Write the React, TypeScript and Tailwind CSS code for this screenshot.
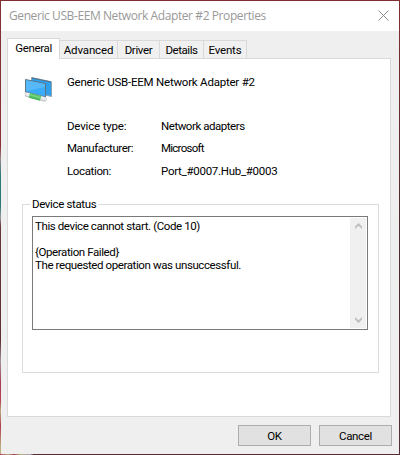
import { ReactNode } from "react";

type Tab = {
  label: string;
  className: string;
};

type Detail = {
  label: string;
  value: string;
  labelClass: string;
  valueClass: string;
};

const tabs: Tab[] = [
  { label: "Advanced", className: "w-[58px] tracking-[-0.15px]" },
  { label: "Driver", className: "w-[42px] tracking-[-0.35px]" },
  { label: "Details", className: "w-[44px] tracking-[-0.43px]" },
  { label: "Events", className: "w-[43px] tracking-[-0.2px]" },
];

const details: Detail[] = [
  {
    label: "Device type:",
    value: "Network adapters",
    labelClass: "tracking-[-0.18px]",
    valueClass: "tracking-[-0.46px]",
  },
  {
    label: "Manufacturer:",
    value: "Microsoft",
    labelClass: "tracking-[-0.45px]",
    valueClass: "tracking-[-0.75px]",
  },
  {
    label: "Location:",
    value: "Port_#0007.Hub_#0003",
    labelClass: "mt-px tracking-[-0.36px]",
    valueClass: "mt-px tracking-[-0.28px]",
  },
];

function AdapterIcon() {
  return (
    <svg width="32" height="32" viewBox="0 0 32 32" className="block">
      <path d="M9.5 5.5 29.5 9.8v14.7L9.5 20z" fill="#2f9fec" stroke="#8fa3ae" />
      <path d="m10 6 19 4" stroke="#4d7086" />
      <path d="M3.5 7.5 23.5 11.6v13.4L3.5 20z" fill="#3aabf7" stroke="#5f7482" />
      <path d="M4 8.2 23 12.1v3L4 19z" fill="#57b9fa" />
      <path d="m5 22.7 17.5 4.6" stroke="#bfc4c6" strokeWidth="4.5" strokeLinecap="round" />
      <path d="m5 22.2 17.5 4.6" stroke="#eceded" strokeWidth="3" strokeLinecap="round" />
      <path d="m7.5 23.4 11 2.9" stroke="#4ab85b" strokeWidth="5" />
      <path d="m7.7 22.8 11 2.9" stroke="#6fd47e" strokeWidth="2" />
    </svg>
  );
}

function Chevron({ down }: { down?: boolean }) {
  return (
    <svg width="7" height="6" viewBox="0 0 7 6" className={down ? "rotate-180" : ""}>
      <path d="M0 3.5 3.5 0 7 3.5V6L3.5 2.7 0 6z" fill="#bfbfbf" />
    </svg>
  );
}

function Button({ children }: { children: ReactNode }) {
  return (
    <button className="h-[21px] w-[73px] border border-[#adadad] bg-[#e1e1e1] text-center leading-[20px]">
      {children}
    </button>
  );
}

export default function App() {
  return (
    <div className="flex h-[455px] w-[400px] flex-col overflow-hidden bg-[#efefef] font-['Roboto','Liberation_Sans',sans-serif] text-[11.5px] leading-[13px] tracking-[-0.35px] whitespace-nowrap text-black">
      <div className="h-px shrink-0 bg-[#812d32]" />
      <div className="flex min-h-0 flex-1">
        <div className="w-px shrink-0 bg-[linear-gradient(to_bottom,#843035_0px,#8c3335_145px,#98868c_158px,#2a7a78_175px,#2c7976_205px,#9a9a9e_217px,#663638_225px,#5e3034_340px,#a2949c_360px,#a83c50_382px,#b64455_400px,#b9ad7b_410px,#b23c54_425px,#b9ad7b_445px)]" />
        <div className="flex min-w-0 flex-1 flex-col">
          <header className="flex h-[30px] shrink-0 items-center justify-between bg-white pr-[10px] pl-2">
            <h1 className="font-['Open_Sans','Noto_Sans',sans-serif] text-xs leading-[30px] tracking-[-0.41px] text-[#999]">
              Generic USB-EEM Network Adapter #2 Properties
            </h1>
            <svg width="11" height="11" viewBox="0 0 11 11" className="mb-[2px]">
              <path d="m.5.5 10 10m0-10-10 10" stroke="#8b8b8b" />
            </svg>
          </header>

          <main className="px-[6px] pt-[7px]">
            <nav className="flex h-[20px] items-end">
              <div className="z-10 -mb-px h-[21px] w-[53px] border border-b-0 border-[#d9d9d9] bg-white pt-[3px] text-center">
                General
              </div>
              {tabs.map((tab) => (
                <div
                  key={tab.label}
                  className={`h-[18px] border-t border-r border-[#d9d9d9] bg-[#f0f0f0] pt-[3px] text-center ${tab.className}`}
                >
                  {tab.label}
                </div>
              ))}
            </nav>

            <section className="h-[359px] w-[384px] border border-[#d9d9d9] bg-white pt-[13px] pl-[14px]">
              <div className="flex gap-[13px]">
                <AdapterIcon />
                <p className="pt-[4px] tracking-[-0.22px]">Generic USB-EEM Network Adapter #2</p>
              </div>

              <dl className="mt-[16px] ml-[45px] flex flex-col gap-[9px]">
                {details.map((item) => (
                  <div key={item.label} className="flex">
                    <dt className={`w-[94px] ${item.labelClass}`}>{item.label}</dt>
                    <dd className={item.valueClass}>{item.value}</dd>
                  </div>
                ))}
              </dl>

              <div className="mt-[26px] h-[169px] w-[357px] border border-[#dcdcdc] px-[9px]">
                <h2 className="-mt-[7px] ml-[-2px] w-fit bg-white px-[2px]">Device status</h2>
                <div className="mt-[5px] flex h-[114px] w-[336px] justify-between border border-[#7a7a7a] p-px">
                  <div className="pt-[2px] pl-px tracking-[-0.4px]">
                    <p>This device cannot start. (Code 10)</p>
                    <p className="mt-[13px]">{"{Operation Failed}"}</p>
                    <p>The requested operation was unsuccessful.</p>
                  </div>
                  <div className="flex w-[16px] flex-col items-center justify-between bg-[#f0f0f0] py-[5px]">
                    <Chevron />
                    <Chevron down />
                  </div>
                </div>
              </div>
            </section>
          </main>

          <footer className="mt-2 flex justify-end gap-2 pr-[7px]">
            <Button>OK</Button>
            <Button>Cancel</Button>
          </footer>
        </div>
        <div className="w-px shrink-0 bg-[linear-gradient(to_bottom,#842e30,#4b2c30_50%,#552d34)]" />
      </div>
      <div className="h-px shrink-0 bg-[linear-gradient(to_right,#b23c54_0px,#b9ad7b_8px,#a83c50_14px,#b9ad7b_20px,#a9a3b4_30px,#5b2a33_34px,#5b2a33)]" />
    </div>
  );
}
